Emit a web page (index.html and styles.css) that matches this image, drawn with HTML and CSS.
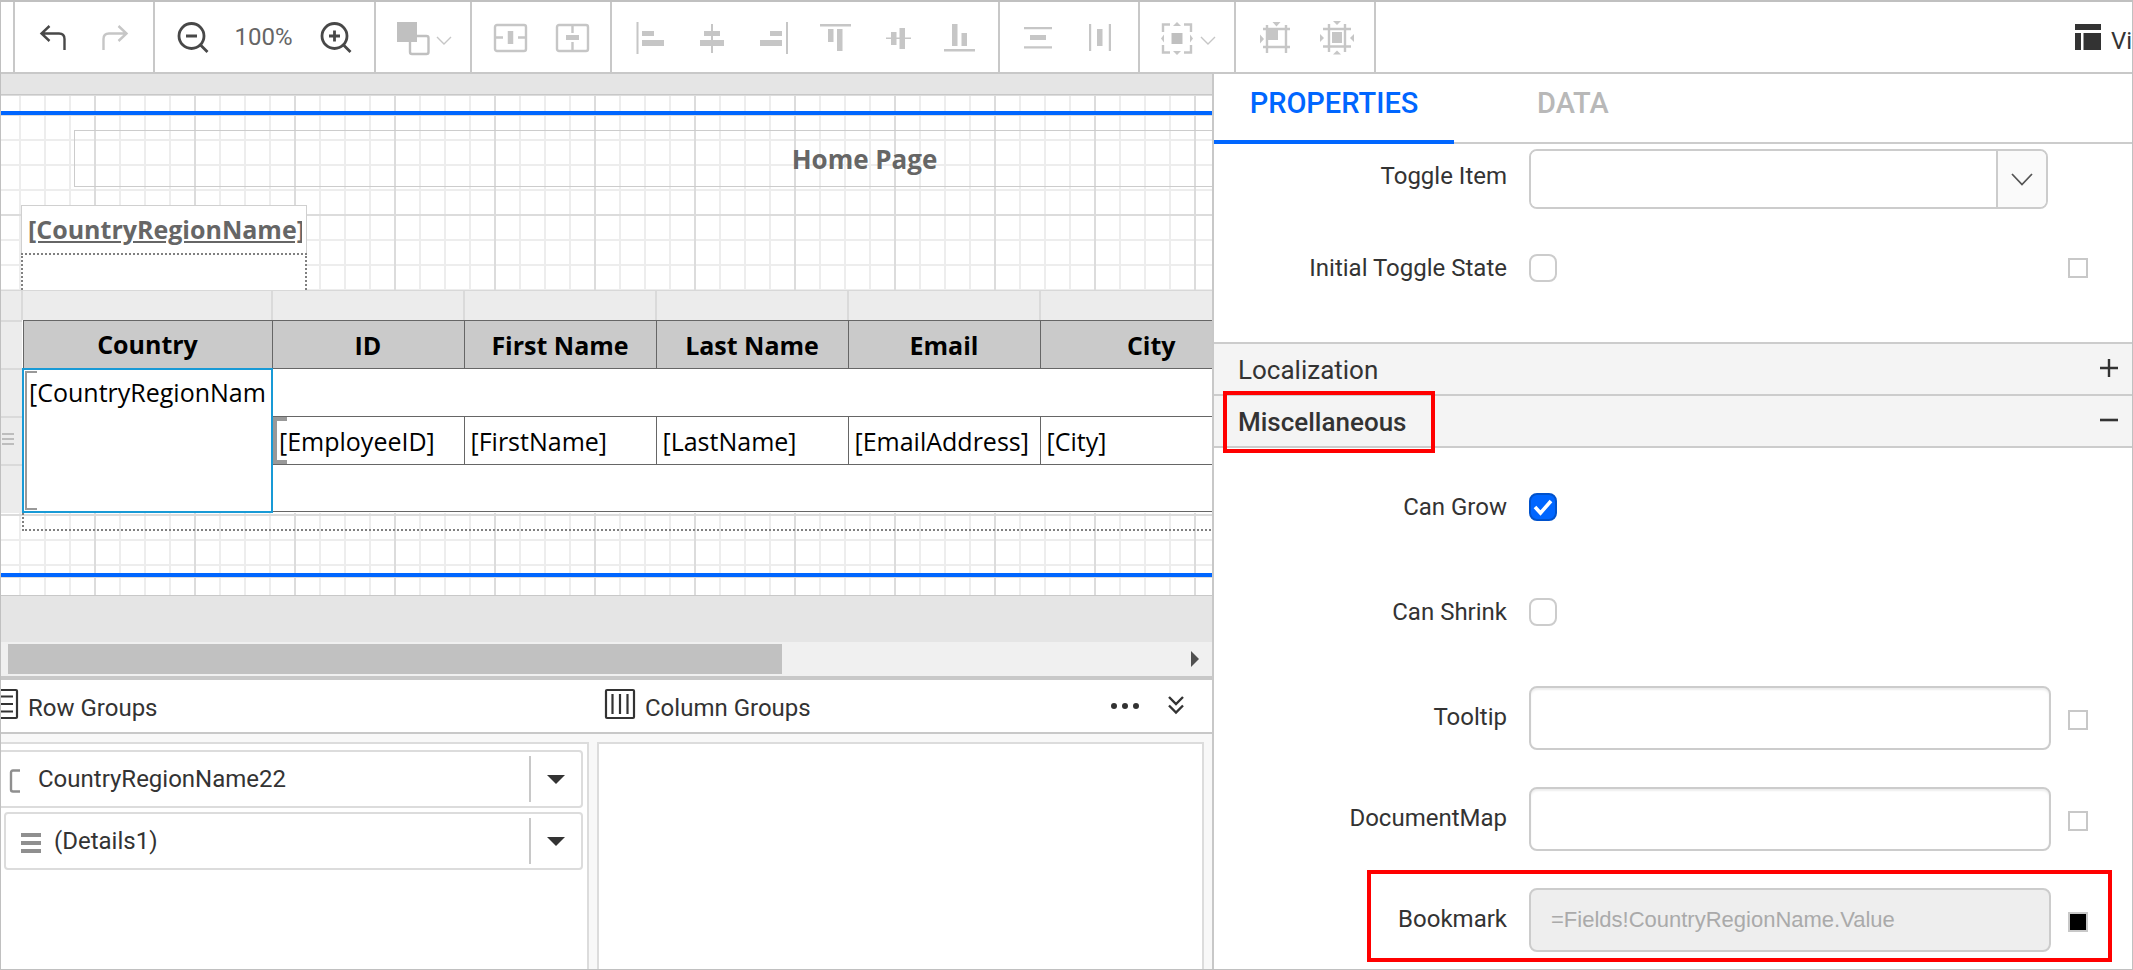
FILE: index.html
```html
<!DOCTYPE html>
<html lang="en">
<head>
<meta charset="utf-8">
<title>Report Designer</title>
<link rel="stylesheet" href="styles.css">
</head>
<body>
<div class="app">
  <header class="toolbar" role="toolbar" aria-label="Designer tools">
    <div class="tool-lead"></div>
    <div class="tool-group">
      <button class="tool tool-dark" type="button" aria-label="Undo"><svg class="icon" viewBox="0 0 34 34"><path d="M12.500 6 4.500 13.500 12.500 21M4.500 13.500H22q5.500 0 5.500 5.500V30" fill="none" stroke="currentColor" stroke-width="2.400"/></svg></button>
      <button class="tool" type="button" aria-label="Redo" disabled><svg class="icon" viewBox="0 0 34 34"><path d="M19.500 6 27.500 13.500 19.500 21M27.500 13.500H10q-5.500 0-5.500 5.500V30" fill="none" stroke="currentColor" stroke-width="2.400"/></svg></button>
    </div>
    <div class="tool-group">
      <button class="tool tool-dark" type="button" aria-label="Zoom out"><svg class="icon" viewBox="0 0 34 34" fill="none" stroke="currentColor" stroke-width="2.800"><circle cx="14.500" cy="16" r="12.500"/><path d="M9 16h11M23.500 25l7 7"/></svg></button>
      <span class="zoom-level">100%</span>
      <button class="tool tool-dark" type="button" aria-label="Zoom in"><svg class="icon" viewBox="0 0 34 34" fill="none" stroke="currentColor" stroke-width="2.800"><circle cx="14.500" cy="16" r="12.500"/><path d="M9 16h11M14.500 10.500v11M23.500 25l7 7"/></svg></button>
    </div>
    <div class="tool-group">
      <button class="tool tool-split" type="button" aria-label="Order" disabled><svg class="icon" viewBox="0 0 34 34"><rect x="14" y="16" width="18.500" height="18" rx="2" fill="#fff" stroke="#c0c0c0" stroke-width="2.400"/><path d="M1 2h20v20H1z" fill="#c0c0c0"/></svg><svg class="caret" viewBox="0 0 16 10"><path d="M1 1l7 7 7-7" fill="none" stroke="currentColor" stroke-width="1.400"/></svg></button>
    </div>
    <div class="tool-group">
      <button class="tool" type="button" aria-label="Merge cells" disabled><svg class="icon" viewBox="0 0 34 34" fill="none" stroke="currentColor" stroke-width="2.400"><rect x="1" y="5" width="31" height="26" rx="2"/><path d="M2 17.500h7M24 17.500h7"/><path d="M16.500 11v13" stroke-width="5.500"/></svg></button>
      <button class="tool" type="button" aria-label="Split cells" disabled><svg class="icon" viewBox="0 0 34 34" fill="none" stroke="currentColor" stroke-width="2.400"><rect x="1" y="5" width="31" height="26" rx="2"/><path d="M16.500 6v7M16.500 22v8"/><path d="M10 17.500h13" stroke-width="5"/></svg></button>
    </div>
    <div class="tool-group">
      <button class="tool" type="button" aria-label="Align left" disabled><svg class="icon" viewBox="0 0 34 34" fill="currentColor"><path d="M2.500 2h2v32h-2zM8 11h12v5H8zM8 20h22v6H8z"/></svg></button>
      <button class="tool" type="button" aria-label="Align center" disabled><svg class="icon" viewBox="0 0 34 34" fill="currentColor"><path d="M15 4h2v29h-2zM8 11h16v5H8zM4 20h24v6H4z"/></svg></button>
      <button class="tool" type="button" aria-label="Align right" disabled><svg class="icon" viewBox="0 0 34 34" fill="currentColor"><path d="M28 2h2v32h-2zM12 11h12v5H12zM2 20h22v6H2z"/></svg></button>
      <button class="tool" type="button" aria-label="Align top" disabled><svg class="icon" viewBox="0 0 34 34" fill="currentColor"><path d="M0 4h31v2.500H0zM8 9h5.500v13H8zM17 9h5.500v22H17z"/></svg></button>
      <button class="tool" type="button" aria-label="Align middle" disabled><svg class="icon" viewBox="0 0 34 34" fill="currentColor"><path d="M4 17.500h25V19H4zM9 12h5.500v13H9zM17.500 8H23v21h-5.500z"/></svg></button>
      <button class="tool" type="button" aria-label="Align bottom" disabled><svg class="icon" viewBox="0 0 34 34" fill="currentColor"><path d="M0 29h31v2.500H0zM8 4h5.500v22H8zM17.500 13H23v13h-5.500z"/></svg></button>
    </div>
    <div class="tool-group">
      <button class="tool" type="button" aria-label="Space vertically" disabled><svg class="icon" viewBox="0 0 34 34" fill="currentColor"><path d="M2 7h28v2.200H2zM8 15h16v5H8zM2 26.300h28v2.200H2z"/></svg></button>
      <button class="tool" type="button" aria-label="Space horizontally" disabled><svg class="icon" viewBox="0 0 34 34" fill="currentColor"><path d="M5 4h2.200v27H5zM13 9h5.500v17H13zM24.800 4H27v27h-2.200z"/></svg></button>
    </div>
    <div class="tool-group">
      <button class="tool tool-split" type="button" aria-label="Center in parent" disabled><svg class="icon" viewBox="0 0 34 34"><path d="M11.500 13h11v11h-11z" fill="#c0c0c0"/><path d="M10 4.500H3V12M24 4.500h7V12M10 32.500H3V25M24 32.500h7V25" fill="none" stroke="currentColor" stroke-width="2.400"/><path d="M13 6l4-4 4 4zM13 31l4 4 4-4zM4 14.500l-3 4 3 4zM30 14.500l3 4-3 4z" fill="currentColor"/></svg><svg class="caret" viewBox="0 0 16 10"><path d="M1 1l7 7 7-7" fill="none" stroke="currentColor" stroke-width="1.400"/></svg></button>
    </div>
    <div class="tool-group">
      <button class="tool" type="button" aria-label="Same position" disabled><svg class="icon" viewBox="0 0 34 34"><path d="M9 5v28M28 5v28M5 9h27M5 27h27" fill="none" stroke="currentColor" stroke-width="2.400"/><path d="M10 10h10v10H10zM14.500 2h8l-4 4.500zM2 14.500l4 4.500-4 4.500z" fill="currentColor"/></svg></button>
      <button class="tool" type="button" aria-label="Same size" disabled><svg class="icon" viewBox="0 0 34 34"><path d="M9 4v28M25 4v28M3 9h28M3 26.500h28" fill="none" stroke="currentColor" stroke-width="2.400"/><path d="M12 12h10v11H12zM13 1h8l-4 4zM13 34.500h8l-4-4zM0 14l4 4-4 4zM34 14l-4 4 4 4z" fill="currentColor"/></svg></button>
    </div>
    <button class="view-button" type="button"><svg class="view-icon" viewBox="0 0 26 26"><path d="M0 0h26v6H0zM0 9h6v17H0zM8.500 9H26v17H8.500z" fill="currentColor"/></svg><span>Vi</span></button>
  </header>

  <div class="workspace">
    <main class="designer">
      <div class="canvas">
        <div class="page-header grid-paper"></div>
        <div class="page-body grid-paper">
          <div class="report-title">Home Page</div>
          <div class="report-link"><span class="link-text">[CountryRegionName]</span></div>
          <div class="report-region"></div>
          <div class="tablix">
            <div class="column-handles"><i></i><i></i><i></i><i></i><i></i><i></i><i></i></div>
            <div class="tablix-main">
              <div class="row-handles"><i></i><i></i><i><svg class="handle" viewBox="0 0 12 12"><path d="M0 1h12M0 6h12M0 11h12" stroke="#bdbdbd" stroke-width="2"/></svg></i><i></i></div>
              <table class="report-table">
                <colgroup><col class="col-country"><col class="col"><col class="col"><col class="col"><col class="col"><col class="col-city"></colgroup>
                <thead><tr><th>Country</th><th>ID</th><th>First Name</th><th>Last Name</th><th>Email</th><th>City</th></tr></thead>
                <tbody>
                  <tr><td class="selected" rowspan="3">[CountryRegionNam</td><td colspan="5"></td></tr>
                  <tr><td class="detail-first">[EmployeeID]</td><td>[FirstName]</td><td>[LastName]</td><td>[EmailAddress]</td><td>[City]</td></tr>
                  <tr class="last-row"><td colspan="5"></td></tr>
                </tbody>
              </table>
            </div>
            <div class="tablix-edge"></div>
          </div>
        </div>
        <div class="page-footer grid-paper"></div>
      </div>
      <div class="scrollbar"><div class="scroll-thumb"></div><svg class="scroll-arrow" viewBox="0 0 8 16"><path d="M0 0l8 8-8 8z" fill="#505050"/></svg></div>
      <section class="groups">
        <div class="groups-head">
          <div class="groups-title rows-title"><svg class="group-icon row-icon" viewBox="0 0 30 30" fill="none" stroke="#333" stroke-width="2.200"><rect x="1" y="1" width="28" height="28" rx="1"/><path d="M5 7.500h20M5 15h20M5 22.500h20"/></svg><h2>Row Groups</h2></div>
          <div class="groups-title"><svg class="group-icon" viewBox="0 0 30 30" fill="none" stroke="#333" stroke-width="2.200"><rect x="1" y="1" width="28" height="28" rx="1"/><path d="M7.500 5v20M15 5v20M22.500 5v20"/></svg><h2>Column Groups</h2></div>
          <button class="head-button" type="button" aria-label="More"><svg class="more" viewBox="0 0 30 8"><circle cx="4" cy="4" r="3"/><circle cx="15" cy="4" r="3"/><circle cx="26" cy="4" r="3"/></svg></button>
          <button class="head-button" type="button" aria-label="Collapse"><svg class="collapse" viewBox="0 0 16 18"><path d="M1 0l7 7 7-7M1 8.500l7 7 7-7" fill="none" stroke="#333" stroke-width="2.400"/></svg></button>
        </div>
        <div class="groups-body">
          <div class="group-list row-list">
            <div class="group-item"><svg class="item-icon bracket" viewBox="0 0 12 24"><path d="M11 1.500H4q-2 0-2 2v17q0 2 2 2h7" fill="none" stroke="#8f8f8f" stroke-width="2.400"/></svg><span>CountryRegionName22</span><button class="item-menu" type="button" aria-label="CountryRegionName22 options"><svg class="down" viewBox="0 0 18 9"><path d="M0 0h18l-9 9z" fill="#333"/></svg></button></div>
            <div class="group-item nested"><svg class="item-icon bars" viewBox="0 0 20 20"><path d="M0 2h20M0 10h20M0 18h20" stroke="#8f8f8f" stroke-width="4"/></svg><span>(Details1)</span><button class="item-menu" type="button" aria-label="Details1 options"><svg class="down" viewBox="0 0 18 9"><path d="M0 0h18l-9 9z" fill="#333"/></svg></button></div>
          </div>
          <div class="group-list"></div>
        </div>
      </section>
    </main>

    <aside class="panel">
      <nav class="tabs" role="tablist">
        <button class="tab tab-active" type="button" role="tab" aria-selected="true">PROPERTIES</button>
        <button class="tab" type="button" role="tab" aria-selected="false">DATA</button>
      </nav>
      <div class="fields fields-top">
        <div class="field field-select">
          <label class="label" for="toggle-item">Toggle Item</label>
          <div class="select-box"><select class="select" id="toggle-item"><option></option></select><span class="select-arrow"><svg class="chevron" viewBox="0 0 22 13"><path d="M1 1l10 10.500L21 1" fill="none" stroke="#555" stroke-width="1.800"/></svg></span></div>
        </div>
        <div class="field">
          <label class="label" for="toggle-state">Initial Toggle State</label>
          <input class="check" type="checkbox" id="toggle-state">
          <button class="marker" type="button" aria-label="Initial toggle state expression"></button>
        </div>
      </div>
      <button class="section" type="button"><span>Localization</span><svg class="sign" viewBox="0 0 18 18"><path d="M0 9h18M9 0v18" stroke="#333" stroke-width="2.400"/></svg></button>
      <button class="section section-open" type="button"><span>Miscellaneous</span><svg class="sign" viewBox="0 0 18 18"><path d="M0 9h18" stroke="#333" stroke-width="2.600"/></svg></button>
      <div class="fields fields-misc">
        <div class="field field-grow">
          <label class="label" for="can-grow">Can Grow</label>
          <input class="check" type="checkbox" id="can-grow" checked>
        </div>
        <div class="field field-shrink">
          <label class="label" for="can-shrink">Can Shrink</label>
          <input class="check" type="checkbox" id="can-shrink">
        </div>
        <div class="field field-text">
          <label class="label" for="tooltip">Tooltip</label>
          <input class="text" type="text" id="tooltip">
          <button class="marker" type="button" aria-label="Tooltip expression"></button>
        </div>
        <div class="field field-text">
          <label class="label" for="docmap">DocumentMap</label>
          <input class="text" type="text" id="docmap">
          <button class="marker" type="button" aria-label="DocumentMap expression"></button>
        </div>
        <div class="field field-text field-marked">
          <label class="label" for="bookmark">Bookmark</label>
          <input class="text" type="text" id="bookmark" value="=Fields!CountryRegionName.Value" disabled>
          <button class="marker marker-set" type="button" aria-label="Bookmark expression"></button>
        </div>
      </div>
    </aside>
  </div>
</div>
</body>
</html>
```
FILE: styles.css
```css
*, *::before, *::after { box-sizing: border-box; }

body {
  margin: 0;
  font-family: Roboto, sans-serif;
  font-size: 24px;
  line-height: 28px;
  color: #333;
  background: #fff;
}

button { font: inherit; color: inherit; background: none; border: 0; padding: 0; margin: 0; }
svg { display: block; flex: none; overflow: visible; }

.app {
  display: flex;
  flex-direction: column;
  height: 100vh;
  overflow: hidden;
  border: 1px solid #c0c0c0;
  border-top-width: 2px;
}

/* Toolbar */
.toolbar { display: flex; flex: none; height: 72px; border-bottom: 2px solid #c8c8c8; overflow: hidden; }
.tool-lead { flex: none; width: 14px; border-right: 2px solid #c8c8c8; }
.tool-group { display: flex; flex: none; align-items: center; padding: 0 6px 0 8px; border-right: 2px solid #c8c8c8; }
.tool { display: flex; justify-content: center; width: 62px; color: #c6c6c6; }
.tool-dark { color: #484848; }
.tool-split { align-items: center; gap: 6px; width: 80px; }
.icon { width: 34px; height: 34px; }
.caret { width: 16px; height: 10px; margin-top: 8px; }
.zoom-level { width: 81px; padding-right: 4px; text-align: center; color: #666; }
.view-button { display: flex; flex: none; align-items: center; gap: 10px; width: 57px; margin-left: auto; }
.view-icon { width: 26px; height: 26px; }
.view-button span { padding-top: 8px; }

.workspace { display: grid; grid-template-columns: minmax(0, 1211fr) minmax(0, 920fr); flex: 1; min-height: 0; }

/* Design surface */
.designer { display: flex; flex-direction: column; min-width: 0; min-height: 0; }
.canvas { flex: none; padding: 20px 0 46px; background: #e5e5e5; overflow: hidden; }
.grid-paper {
  background-color: #fff;
  background-image:
    linear-gradient(#dcdcdc 2px, transparent 2px),
    linear-gradient(to right, #dcdcdc 2px, transparent 2px),
    linear-gradient(#ededed 2px, transparent 2px),
    linear-gradient(to right, #ededed 2px, transparent 2px);
  background-size: 100px 100px, 100px 100px, 25px 25px, 25px 25px;
  background-position: 0 -1px, 93px 0, 0 -1px, 18px 0;
}
.page-header { height: 17px; border-top: 1px solid #c8c8c8; }
.page-body { position: relative; height: 466px; border: solid #06f; border-width: 4px 0; overflow: hidden; }
.page-footer { height: 19px; border-bottom: 1px solid #c8c8c8; }

.report-title, .report-link, .report-table { font-family: "Open Sans", sans-serif; }
.report-title {
  position: absolute; left: 73px; top: 15px; width: 1581px; height: 57px;
  border: 1px solid #ccc; color: #666; font-size: 26px; font-weight: 700; line-height: 57px; text-align: center;
}
.report-link {
  position: absolute; left: 20px; top: 90px; width: 286px; height: 49px; padding: 6px 4px 0 6px;
  background: #fff; border: 1px solid #d0d0d0; color: #666; font-size: 25px; font-weight: 700; line-height: 34px;
}
.link-text { display: block; overflow: hidden; text-decoration: underline; white-space: nowrap; }
.report-region { position: absolute; left: 20px; top: 138px; width: 286px; height: 60px; background: #fff; border: 2px dotted #808080; }

.tablix { position: absolute; left: 0; top: 175px; width: 1262px; }
.column-handles { display: grid; grid-template-columns: 22px 250px repeat(4, 192px) 222px; height: 30px; background: #ececec; border-top: 1px solid #d8d8d8; }
.column-handles i { border-right: 2px solid #dadada; }
.tablix-main { display: flex; }
.row-handles { display: grid; grid-template-rows: 48px 48px 48px 47px; width: 21px; background: #ececec; }
.row-handles i { border-top: 2px solid #dadada; }
.handle { width: 12px; height: 12px; margin: 15px 0 0 1px; }
.report-table { table-layout: fixed; width: 1241px; border-collapse: collapse; background: #fff; color: #000; font-size: 25px; line-height: 34px; }
.col-country { width: 249px; }
.col { width: 192px; }
.report-table th { height: 48px; padding: 0; background: #cacaca; border: 1px solid #666; font-weight: 700; }
.report-table td { height: 48px; padding: 0 6px; border: 1px solid #666; }
.report-table .last-row td { height: 47px; }
.report-table .selected {
  padding: 5px 5px; vertical-align: top; border: 2px solid #189ad6;
  background:
    linear-gradient(#999, #999) 1px 1px / 2px calc(100% - 2px) no-repeat,
    linear-gradient(#999, #999) 1px 1px / 12px 2px no-repeat,
    linear-gradient(#999, #999) 1px calc(100% - 1px) / 12px 2px no-repeat;
}
.report-table .detail-first {
  background:
    linear-gradient(#999, #999) 0 0 / 4px 100% no-repeat,
    linear-gradient(#999, #999) 0 0 / 14px 4px no-repeat,
    linear-gradient(#999, #999) 0 100% / 14px 4px no-repeat;
}
.tablix-edge { height: 18px; margin-left: 21px; border: dotted #808080; border-width: 0 0 2px 2px; }

.scrollbar { display: flex; flex: none; align-items: center; justify-content: space-between; height: 34px; padding: 0 13px 0 7px; background: #f0f0f0; }
.scroll-thumb { width: 65%; height: 30px; background: #c1c1c1; }
.scroll-arrow { width: 8px; height: 16px; }

/* Row and column groups */
.groups { display: flex; flex: 1; flex-direction: column; min-height: 0; border-top: 4px solid #c8c8c8; }
.groups-head { display: flex; flex: none; align-items: center; height: 54px; border-bottom: 2px solid #c8c8c8; overflow: hidden; }
.groups-head h2 { margin: 0; padding-top: 4px; font-size: 24px; font-weight: 400; line-height: 28px; }
.groups-title { display: flex; align-items: center; gap: 10px; flex: 1; }
.rows-title { flex: 0 0 604px; }
.group-icon { width: 30px; height: 30px; margin-bottom: 4px; }
.row-icon { margin-left: -13px; }
.head-button { margin-right: 28px; }
.more { width: 30px; height: 8px; fill: #333; }
.collapse { width: 16px; height: 18px; }
.groups-body { display: grid; grid-template-columns: minmax(0, 588fr) minmax(0, 607fr); gap: 8px; flex: 1; min-height: 0; padding: 8px 8px 0 0; background: #f8f8f8; }
.group-list { display: flex; flex-direction: column; gap: 4px; min-width: 0; background: #fff; border: 2px solid #dcdcdc; border-bottom: 0; }
.row-list { padding: 6px 4px 0 0; border-left: 0; overflow: hidden; }
.group-item { display: flex; flex: none; align-items: center; height: 58px; border: 2px solid #dcdcdc; border-radius: 4px; margin-left: -3px; padding-left: 9px; }
.nested { margin-left: 3px; padding-left: 15px; }
.item-icon { margin-top: 4px; }
.bracket { width: 12px; height: 24px; margin-right: 17px; }
.bars { width: 20px; height: 20px; margin-right: 13px; }
.item-menu { display: flex; align-items: center; height: 46px; margin-left: auto; padding: 0 16px; border-left: 2px solid #c8c8c8; }
.down { width: 18px; height: 9px; }

/* Property panel */
.panel { min-width: 0; border-left: 2px solid #c8c8c8; overflow: hidden; }
.tabs { display: flex; height: 70px; box-shadow: inset 0 -2px #ccc; }
.tab { padding: 0 34px 8px; font-size: 29px; line-height: 32px; font-weight: 500; color: #b8b8b8; border-bottom: 4px solid transparent; }
.tab-active { color: #06f; border-color: #06f; width: 240px; padding: 0 0 8px; }
.tab + .tab { margin-left: 49px; }
.fields-top { padding: 5px 0 60px; }
.fields-misc { padding-top: 45px; }
.field { position: relative; display: grid; grid-template-columns: 293px minmax(0, 1fr) 20px; align-items: center; column-gap: 22px; min-height: 28px; padding-right: 44px; }
.label { text-align: right; }
.field-select { grid-template-columns: 293px minmax(0, 1fr); padding-right: 84px; margin-bottom: 45px; }
.field-select .label { padding-bottom: 6px; }
.select-box { display: flex; height: 60px; border: 2px solid #ccc; border-radius: 8px; overflow: hidden; }
.select { flex: 1; min-width: 0; border: 0; background: #fff; appearance: none; font: inherit; }
.select-arrow { display: flex; align-items: center; justify-content: center; width: 50px; border-left: 2px solid #ccc; background: #fafafa; }
.chevron { width: 22px; height: 13px; }
.check { appearance: none; width: 28px; height: 28px; margin: 0; border: 2px solid #ccc; border-radius: 8px; background: #fff center / 20px 18px no-repeat; }
.check:checked { border-color: #0052cc; background-color: #06f; background-image: url("data:image/svg+xml,%3Csvg xmlns='http://www.w3.org/2000/svg' viewBox='0 0 20 18'%3E%3Cpath d='M2 9l5.500 6L18 3' fill='none' stroke='white' stroke-width='3.600'/%3E%3C/svg%3E"); }
.field-grow { margin-bottom: 77px; }
.field-shrink { margin-bottom: 60px; }
.field-text { grid-template-columns: 293px minmax(0, 1fr) 37px; column-gap: 0; margin-bottom: 37px; }
.field-text .label { padding-bottom: 2px; }
.field-text .text { margin-left: 22px; }
.field-text .marker { justify-self: end; margin-top: 4px; }
.text { height: 64px; min-width: 0; padding: 0 20px; border: 2px solid #ccc; border-radius: 8px; background: #fff; box-shadow: inset 0 2px 2px #eee; font-family: "Liberation Sans", Arial, sans-serif; font-size: 22px; }
.text:disabled { background: #eee; color: #aaa; box-shadow: none; }
.marker { width: 20px; height: 20px; background: #fff; border: 2px solid #c8c8c8; }
.marker-set { background: #000; }
.section { position: relative; display: flex; align-items: center; justify-content: space-between; width: 100%; height: 52px; padding: 2px 14px 0 24px; background: #f4f4f4; border-top: 2px solid #ccc; font-size: 26px; }
.sign { width: 18px; height: 18px; margin-bottom: 4px; }
.section-open { height: 54px; border-bottom: 2px solid #ccc; font-weight: 500; }

/* Callout frames */
.section-open::after, .field-marked::after { content: ""; position: absolute; border: 4px solid #f00; pointer-events: none; }
.section-open::after { left: 9px; top: -5px; width: 212px; height: 62px; }
.field-marked::after { left: 153px; right: 20px; top: -18px; bottom: -10px; }
```
